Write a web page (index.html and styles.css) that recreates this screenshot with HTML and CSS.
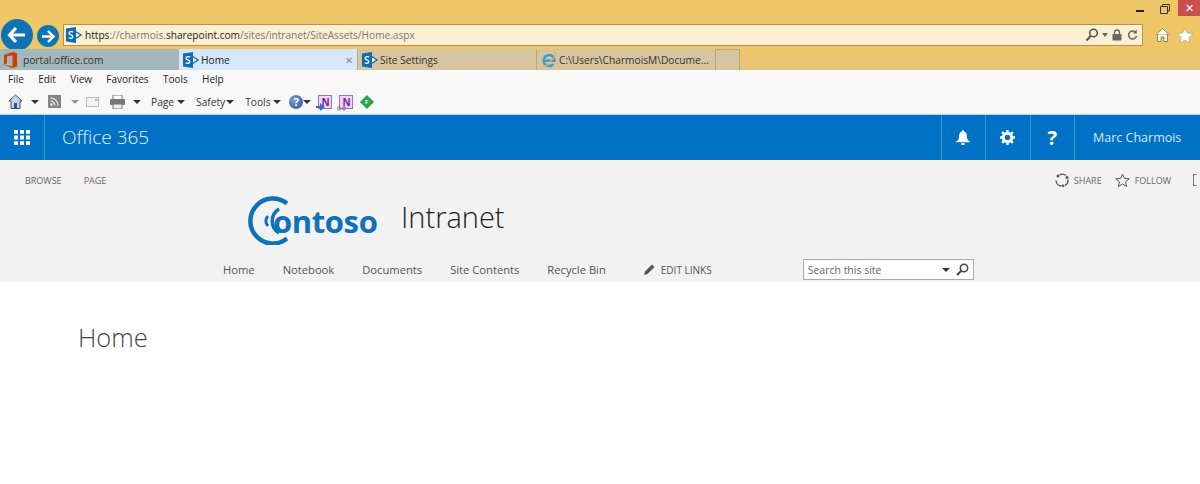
FILE: index.html
```html
<!DOCTYPE html>
<html lang="en">
  <head>
    <meta charset="UTF-8" />
    <meta name="viewport" content="width=device-width, initial-scale=1.0" />
    <title>Home</title>
    <link rel="stylesheet" href="styles.css">
  </head>
  <body>
    <svg class="defs" width="0" height="0">
      <symbol id="sp" viewBox="0 0 16 16">
        <path d="M8 3.500 15 8l-7 4.500" fill="#fff" stroke="#0f6cb5" stroke-width="1.300"/>
        <path d="M0 1.500 10 0v16L0 14.500z" fill="#0f6cb5"/>
        <path d="M7 5.300C6.300 4.500 3 4.200 3 6.200c0 1.900 3.800 1.500 3.800 3.500 0 2-3.100 1.800-4 1" fill="none" stroke="#fff" stroke-width="1.300"/>
      </symbol>
    </svg>

    <div class="chrome">
      <div class="window-controls">
        <span class="minimize"></span>
        <svg class="restore" width="10" height="10" viewBox="0 0 10 10"><path d="M2.500 2.500V.5h7v6.500H7.500M.5 2.500h7v7h-7z" fill="none" stroke="#333"/></svg>
        <span class="close">✕</span>
      </div>
      <div class="nav-row">
        <button class="back"><svg width="20" height="18" viewBox="0 0 20 18"><path d="M9 2 2.500 9 9 16M3 9h15" fill="none" stroke="#fff" stroke-width="3.200"/></svg></button>
        <button class="forward"><svg width="14" height="13" viewBox="0 0 14 13"><path d="M7 1l5.500 5.500L7 12M12 6.500H1" fill="none" stroke="#fff" stroke-width="2.400"/></svg></button>
        <div class="address">
          <svg width="16" height="16" viewBox="0 0 16 16"><use href="#sp"/></svg>
          <span class="url"><b>https</b>://charmois.<b>sharepoint.com</b>/sites/intranet/SiteAssets/Home.aspx</span>
          <svg width="14" height="14" viewBox="0 0 14 14"><circle cx="8.500" cy="5" r="3.800" fill="none" stroke="#555" stroke-width="1.500"/><path d="M5.500 8 1.500 12.500" stroke="#555" stroke-width="2"/></svg>
          <span class="caret caret-grey"></span>
          <svg class="lock" width="10" height="12" viewBox="0 0 10 12"><path d="M2.500 5V3.500a2.500 2.500 0 0 1 5 0V5" fill="none" stroke="#666" stroke-width="1.300"/><rect x="0.500" y="5" width="9" height="6.500" fill="#666"/></svg>
          <svg width="11" height="12" viewBox="0 0 11 12"><path d="M9.500 7a4 4 0 1 1-1.300-4" fill="none" stroke="#666" stroke-width="1.500"/><path d="M9.800.5v4h-4z" fill="#666"/></svg>
        </div>
        <svg class="browser-home" width="15" height="14" viewBox="0 0 15 14"><path d="M.5 7 7.500.5l7 6.500M2.500 6v7.500h3.500V9h3v4.500h3.500V6" fill="#fff" stroke="#6d5f3a" stroke-width=".7"/></svg>
        <svg class="browser-star" width="16" height="15" viewBox="0 0 16 15"><path d="M8 0l2.400 5 5.600.7-4.100 3.800 1.100 5.500L8 12.300 3 15l1.100-5.500L0 5.700 5.600 5z" fill="#fff" stroke="#a08a50" stroke-width=".5"/></svg>
      </div>
      <div class="tabs">
        <div class="tab tab-office">
          <svg width="14" height="16" viewBox="0 0 14 16"><path d="M0 3 8.500 0 13 1.300v13.400L8.500 16 0 13l8.500 1.200V3.300L3 4.500V11L0 13z" fill="#d83b01"/></svg>
          <span>portal.office.com</span>
        </div>
        <div class="tab tab-active">
          <svg width="16" height="16" viewBox="0 0 16 16"><use href="#sp"/></svg>
          <span>Home</span>
          <span class="tab-close">✕</span>
        </div>
        <div class="tab">
          <svg width="16" height="16" viewBox="0 0 16 16"><use href="#sp"/></svg>
          <span>Site Settings</span>
        </div>
        <div class="tab">
          <svg width="16" height="16" viewBox="0 0 16 16">
            <path d="M4 8.800h9.500A5.500 5.500 0 1 0 12.300 12" fill="none" stroke="#3c9ad6" stroke-width="2.400"/>
            <path d="M1.500 14.500c2 1 8-3.500 13-11.500M12 1.300c2-.8 3.500 0 2.500 2" fill="none" stroke="#e8b83a" stroke-width="1.300"/>
          </svg>
          <span>C:\Users\CharmoisM\Docume...</span>
        </div>
        <div class="tab tab-new"></div>
      </div>
    </div>

    <div class="menu-bar">
      <span>File</span><span>Edit</span><span>View</span><span>Favorites</span><span>Tools</span><span>Help</span>
    </div>

    <div class="toolbar">
      <div class="tool tool-home">
        <svg width="15" height="15" viewBox="0 0 15 15"><path d="M7.500 1 1 7h2v7.500h9V7h2z" fill="#c4d4e6" stroke="#39577e"/><rect x="6" y="9" width="3" height="5.500" fill="#39577e"/></svg>
        <span class="caret"></span>
      </div>
      <div class="tool tool-rss">
        <svg width="13" height="13" viewBox="0 0 13 13"><rect width="13" height="13" fill="#858585"/><circle cx="3.500" cy="9.500" r="1.300" fill="#eee"/><path d="M2.500 6a4.500 4.500 0 0 1 4.500 4.500M2.500 3a7.500 7.500 0 0 1 7.500 7.500" fill="none" stroke="#eee" stroke-width="1.200"/></svg>
        <span class="caret caret-light"></span>
      </div>
      <svg class="tool-mail" width="13" height="10" viewBox="0 0 13 10"><rect x=".5" y=".5" width="12" height="9" fill="#f4f4f4" stroke="#bbb"/><rect x="9" y="2" width="2.500" height="1.500" fill="#d88"/></svg>
      <div class="tool tool-print">
        <svg width="15" height="14" viewBox="0 0 15 14"><rect x="3" y="0" width="9" height="5" fill="#fff" stroke="#777"/><rect y="4" width="15" height="6" rx="1" fill="#777"/><rect x="3" y="9" width="9" height="5" fill="#eee" stroke="#777"/></svg>
        <span class="caret"></span>
      </div>
      <div class="tool tool-page"><span>Page</span><span class="caret"></span></div>
      <div class="tool tool-safety"><span>Safety</span><span class="caret"></span></div>
      <div class="tool tool-tools"><span>Tools</span><span class="caret"></span></div>
      <div class="tool tool-help">
        <span class="help-badge">?</span>
        <span class="caret"></span>
      </div>
      <span class="note-icon note-send">N
        <svg class="note-extra" width="9" height="8" viewBox="0 0 9 8"><path d="M0 3h4V0l5 4-5 4V5H0z" fill="#2f6fc4"/></svg>
      </span>
      <span class="note-icon">N
        <svg class="note-extra" width="9" height="5" viewBox="0 0 9 5"><circle cx="2" cy="2.500" r="1.600" fill="none" stroke="#777"/><circle cx="7" cy="2.500" r="1.600" fill="none" stroke="#777"/></svg>
      </span>
      <span class="green-badge"><i>F</i></span>
    </div>

    <div class="suite-bar">
      <div class="waffle">
        <svg width="16" height="15" viewBox="0 0 16 15"><path d="M0 0h4v3.800H0zM6 0h4v3.800H6zM12 0h4v3.800h-4zM0 5.600h4v3.800H0zM6 5.600h4v3.800H6zM12 5.600h4v3.800h-4zM0 11.200h4V15H0zM6 11.200h4V15H6zM12 11.200h4V15h-4z" fill="#fff"/></svg>
      </div>
      <div class="suite-title">Office 365</div>
      <div class="suite-btn">
        <svg width="14" height="15" viewBox="0 0 14 15"><path d="M7 0a1 1 0 0 1 1 1.200C10.500 2 11 4.500 11 7c0 2 1 3.500 3 4.500v.8H0v-.8C2 10.500 3 9 3 7c0-2.500.5-5 3-5.800A1 1 0 0 1 7 0zM5 13.200h4a2 2 0 0 1-4 0z" fill="#fff"/></svg>
      </div>
      <div class="suite-btn">
        <svg width="15" height="15" viewBox="0 0 15 15"><circle cx="7.500" cy="7.500" r="4.300" fill="none" stroke="#fff" stroke-width="3"/><path d="M7.500 0v15M0 7.500h15M2.200 2.200l10.600 10.600M12.800 2.200 2.200 12.800" stroke="#fff" stroke-width="2.400" stroke-dasharray="2.400 10.200"/></svg>
      </div>
      <div class="suite-btn suite-help">?</div>
      <div class="suite-user">Marc Charmois</div>
    </div>

    <div class="site-header">
      <div class="ribbon">
        <span class="ribbon-tab">BROWSE</span>
        <span class="ribbon-tab">PAGE</span>
        <div class="ribbon-actions">
          <svg width="14" height="14" viewBox="0 0 14 14"><path d="M4.500 1.800A6 6 0 0 1 11 2.500M13 6.500a6 6 0 0 1-3 6M6.500 13.200A6 6 0 0 1 1 7.500" fill="none" stroke="#555" stroke-width="1.300"/><circle cx="3" cy="3" r="1.500" fill="#555"/><circle cx="12" cy="4.500" r="1.500" fill="#555"/><circle cx="8" cy="12.700" r="1.300" fill="#555"/></svg>
          <span class="action-label">SHARE</span>
          <svg class="follow-star" width="15" height="15" viewBox="0 0 15 15"><path d="M7.500 1l1.900 4.400 4.800.4-3.700 3.100 1.200 4.700-4.200-2.600-4.200 2.600 1.200-4.700L.8 5.800l4.800-.4z" fill="none" stroke="#555"/></svg>
          <span class="action-label">FOLLOW</span>
          <svg class="focus-icon" width="12" height="12" viewBox="0 0 12 12"><path d="M3.500.5h-3v11h3M8.500.5h3v11h-3" fill="none" stroke="#777"/></svg>
        </div>
      </div>
      <div class="brand">
        <div class="logo">
          <svg width="50" height="50" viewBox="0 0 50 50">
            <path d="M39 8.500A22.500 22.500 0 1 0 39 43.500" fill="none" stroke="#0f72b8" stroke-width="4.500"/>
            <path d="M31 14A14 14 0 0 0 31 38" fill="none" stroke="#0f72b8" stroke-width="3.500"/>
            <path d="M20 21A7 7 0 0 0 20 31" fill="none" stroke="#0f72b8" stroke-width="3"/>
          </svg>
          <span class="logo-text">ontoso</span>
        </div>
        <div class="site-title">Intranet</div>
      </div>
      <div class="top-nav">
        <a class="nav-home">Home</a>
        <a>Notebook</a>
        <a>Documents</a>
        <a>Site Contents</a>
        <a>Recycle Bin</a>
        <svg class="pencil" width="11" height="11" viewBox="0 0 11 11"><path d="M0 11l1-3.500L8 .5 10.500 3l-7 7z" fill="#555"/></svg>
        <span class="edit-links">EDIT LINKS</span>
        <div class="search-box">
          <span class="search-text">Search this site</span>
          <span class="caret"></span>
          <svg width="13" height="13" viewBox="0 0 13 13"><circle cx="8" cy="5" r="3.700" fill="none" stroke="#444" stroke-width="1.500"/><path d="M5.300 7.700 1 12" stroke="#444" stroke-width="2"/></svg>
        </div>
      </div>
    </div>

    <h1 class="page-title">Home</h1>
  </body>
</html>
```

FILE: styles.css
```css
* {
  margin: 0;
  padding: 0;
  box-sizing: border-box;
}
body {
  font-family: "Open Sans", "Noto Sans", sans-serif;
  background-color: #fff;
  overflow: hidden;
}
svg {
  display: block;
  flex-shrink: 0;
}
.defs {
  position: absolute;
}
.caret {
  width: 0;
  height: 0;
  border-left: 4px solid transparent;
  border-right: 4px solid transparent;
  border-top: 4px solid #333;
}
.caret-grey {
  border-top-color: #666;
  border-left-width: 3.500px;
  border-right-width: 3.500px;
  margin: 0 -1px 0 -2px;
}
.caret-light {
  border-top-color: #999;
}

/* browser frame */
.chrome {
  height: 70px;
  background: linear-gradient(#f0c768 0, #f0c768 50px, #e6c37c 70px);
}
.window-controls {
  height: 24px;
  display: flex;
  justify-content: flex-end;
  align-items: flex-start;
}
.minimize {
  width: 8px;
  height: 2px;
  background-color: #222;
  margin: 10px 16px 0 0;
}
.restore {
  margin: 4px 8px 0 0;
}
.close {
  width: 22px;
  height: 16px;
  background-color: #c9504f;
  color: #fff;
  font-size: 11px;
  line-height: 16px;
  padding-left: 7px;
  overflow: hidden;
}
.nav-row {
  height: 22px;
  display: flex;
  align-items: center;
  padding-left: 1px;
}
.back,
.forward {
  border: none;
  border-radius: 50%;
  background-color: #0f74b5;
  display: flex;
  align-items: center;
  justify-content: center;
}
.back {
  width: 32px;
  height: 32px;
  margin-top: -1px;
}
.forward {
  width: 22px;
  height: 22px;
  margin: 2px 0 0 4px;
}
.address {
  width: 1080px;
  height: 22px;
  margin-left: 4px;
  border: 1px solid #b8914a;
  background-color: #fdf0d2;
  display: flex;
  align-items: center;
  column-gap: 5px;
  padding: 0 4px 0 2px;
  font-size: 10.150px;
  color: #777;
}
.url {
  flex: 1;
  margin-left: -2px;
  white-space: nowrap;
}
.url b {
  font-weight: 400;
  color: #222;
}
.browser-home {
  margin-left: 12px;
}
.browser-star {
  margin-left: 7px;
}
.tabs {
  height: 24px;
  display: flex;
  align-items: flex-end;
}
.tab {
  width: 179px;
  height: 21px;
  background-color: #d5c69f;
  border-right: 1px solid #b8a97f;
  display: flex;
  align-items: center;
  column-gap: 2px;
  padding-left: 4px;
  font-size: 10.200px;
  color: #333;
}
.tab-office {
  background-color: #a4b8ba;
  border-right: none;
  column-gap: 5px;
}
.tab-active {
  background-color: #d6e8f7;
  color: #222;
}
.tab-close {
  margin-left: auto;
  margin-right: 4px;
  font-size: 10px;
  color: #888;
}
.tab-new {
  width: 24px;
  border-top: 1px solid #b8a97f;
}

/* ie menu and command bar */
.menu-bar {
  height: 18px;
  background-color: #f8f8f8;
  display: flex;
  align-items: center;
  column-gap: 14.300px;
  padding-left: 8px;
  font-size: 10px;
  color: #222;
}
.toolbar {
  height: 27px;
  background-color: #f8f8f8;
  border-bottom: 1px solid #a9d3f0;
  display: flex;
  align-items: center;
  padding: 1px 0 0 8px;
  font-size: 10.200px;
  color: #333;
}
.tool {
  display: flex;
  align-items: center;
}
.tool-home {
  column-gap: 8px;
}
.tool-rss {
  margin-left: 9px;
  column-gap: 10px;
}
.tool-mail {
  margin-left: 7px;
}
.tool-print {
  margin-left: 11px;
  column-gap: 8px;
}
.tool-page {
  margin-left: 10px;
  column-gap: 3px;
}
.tool-safety {
  margin-left: 11px;
  column-gap: 1px;
}
.tool-tools {
  margin-left: 11px;
  column-gap: 3px;
}
.tool-help {
  margin-left: 8px;
  column-gap: 0;
}
.help-badge {
  width: 14px;
  height: 14px;
  border-radius: 50%;
  background: radial-gradient(circle at 35% 35%, #7d9bd4, #2f4f96);
  color: #fff;
  font-size: 11px;
  font-weight: 700;
  line-height: 14px;
  text-align: center;
}
.note-icon {
  position: relative;
  width: 14px;
  height: 14px;
  margin-left: 7px;
  background-color: #ecd8f0;
  border: 1px solid #a56fc0;
  color: #7b1fa2;
  font-size: 10px;
  font-weight: 700;
  line-height: 12px;
  text-align: center;
}
.note-extra {
  position: absolute;
  left: -3px;
  bottom: -3px;
}
.green-badge {
  width: 10px;
  height: 10px;
  margin-left: 9px;
  background-color: #2aa84a;
  transform: rotate(45deg);
  display: flex;
  align-items: center;
  justify-content: center;
}
.green-badge i {
  transform: rotate(-45deg);
  font-size: 6px;
  font-style: normal;
  font-weight: 700;
  color: #fff;
}

/* office 365 bar */
.suite-bar {
  height: 45px;
  background-color: #0072c6;
  display: flex;
  align-items: stretch;
  color: #fff;
}
.waffle {
  width: 45px;
  border-right: 1px solid #3d95d6;
  display: flex;
  align-items: center;
  justify-content: center;
}
.suite-title {
  flex: 1;
  padding-left: 17px;
  font-size: 19px;
  font-weight: 300;
  line-height: 45px;
  color: #e4f1fb;
}
.suite-btn {
  width: 44.500px;
  border-left: 1px solid #3d95d6;
  display: flex;
  align-items: center;
  justify-content: center;
}
.suite-help {
  font-size: 20px;
  font-weight: 700;
}
.suite-user {
  width: 126px;
  border-left: 1px solid #3d95d6;
  padding-left: 18px;
  font-size: 12.500px;
  line-height: 46px;
  white-space: nowrap;
  color: #d6eafa;
}

/* sharepoint header */
.site-header {
  height: 122px;
  background-color: #f2f2f2;
}
.ribbon {
  height: 35px;
  display: flex;
  align-items: center;
  padding: 5px 0 0 25px;
  font-size: 9px;
  color: #666;
}
.ribbon-tab {
  margin-right: 22px;
}
.ribbon-actions {
  margin-left: auto;
  margin-right: -5px;
  display: flex;
  align-items: center;
  column-gap: 5px;
}
.follow-star {
  margin-left: 8px;
}
.focus-icon {
  margin-left: 17px;
}
.brand {
  height: 50px;
  display: flex;
  align-items: center;
  padding-left: 248px;
}
.logo {
  width: 131px;
  display: flex;
  align-items: center;
}
.logo-text {
  margin-left: -25px;
  margin-top: 2px;
  font-size: 31px;
  font-weight: 700;
  letter-spacing: -0.4px;
  color: #0f72b8;
}
.site-title {
  margin: 0 0 8px 22px;
  font-size: 29px;
  font-weight: 300;
  color: #222;
}
.top-nav {
  height: 37px;
  padding-top: 12px;
  display: flex;
  align-items: center;
  column-gap: 28px;
  font-size: 11.200px;
  color: #555;
}
.top-nav a {
  white-space: nowrap;
}
.nav-home {
  margin-left: 223px;
}
.pencil {
  margin-left: 10px;
  margin-right: -22px;
}
.edit-links {
  font-size: 10px;
}
.search-box {
  width: 171px;
  height: 21px;
  margin-left: 63px;
  background-color: #fff;
  border: 1px solid #ababab;
  display: flex;
  align-items: center;
  padding: 0 4px;
  font-size: 10.500px;
  color: #666;
}
.search-text {
  flex: 1;
}
.search-box svg {
  margin-left: 6px;
}

.page-title {
  margin: 38px 0 0 78px;
  font-size: 25.500px;
  font-weight: 300;
  color: #444;
}
```
